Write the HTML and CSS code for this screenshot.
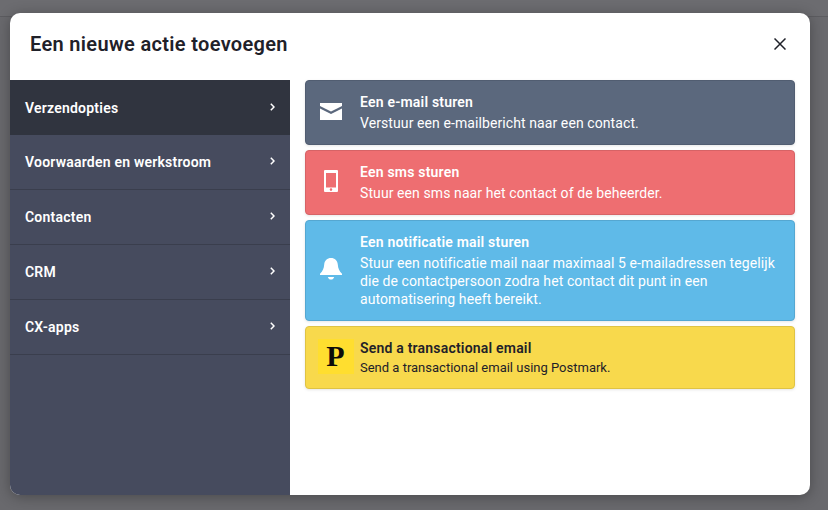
FILE: index.html
```html
<!DOCTYPE html>
<html lang="nl">
<head>
<meta charset="utf-8">
<title>Een nieuwe actie toevoegen</title>
<link rel="stylesheet" href="styles.css">
</head>
<body>
<div class="backdrop">
  <div class="modal">
    <header class="modal-head">
      <h1>Een nieuwe actie toevoegen</h1>
      <svg class="close" viewBox="0 0 12 12" width="12" height="12"><path d="M.5.5l11 11M11.500.5l-11 11" stroke="#1f2129" stroke-width="1.500" fill="none"/></svg>
    </header>
    <div class="modal-body">
      <nav class="side">
        <a class="side-item active"><span>Verzendopties</span><svg viewBox="0 0 5 8" width="5" height="8"><path d="M.8.8L4 4 .8 7.200" stroke="#fff" stroke-width="1.500" fill="none"/></svg></a>
        <a class="side-item"><span>Voorwaarden en werkstroom</span><svg viewBox="0 0 5 8" width="5" height="8"><path d="M.8.8L4 4 .8 7.200" stroke="#fff" stroke-width="1.500" fill="none"/></svg></a>
        <a class="side-item"><span>Contacten</span><svg viewBox="0 0 5 8" width="5" height="8"><path d="M.8.8L4 4 .8 7.200" stroke="#fff" stroke-width="1.500" fill="none"/></svg></a>
        <a class="side-item"><span>CRM</span><svg viewBox="0 0 5 8" width="5" height="8"><path d="M.8.8L4 4 .8 7.200" stroke="#fff" stroke-width="1.500" fill="none"/></svg></a>
        <a class="side-item"><span>CX-apps</span><svg viewBox="0 0 5 8" width="5" height="8"><path d="M.8.8L4 4 .8 7.200" stroke="#fff" stroke-width="1.500" fill="none"/></svg></a>
      </nav>
      <main class="cards">
        <div class="card slate">
          <div class="icon"><svg viewBox="0 0 22 17" width="22" height="17"><path d="M0 0h22v3L11 8.500 0 3z M0 5.500l11 5.500 11-5.500V17H0z" fill="#fff"/></svg></div>
          <div class="text"><h2>Een e-mail sturen</h2><p>Verstuur een e-mailbericht naar een contact.</p></div>
        </div>
        <div class="card red">
          <div class="icon"><svg viewBox="0 0 14 22" width="14" height="22"><path fill-rule="evenodd" d="M1 0h12a1 1 0 0 1 1 1v20a1 1 0 0 1-1 1H1a1 1 0 0 1-1-1V1a1 1 0 0 1 1-1zM2 3v14.500h10V3zM7 18.300a1.300 1.300 0 1 0 0 2.600 1.300 1.300 0 0 0 0-2.600z" fill="#fff"/></svg></div>
          <div class="text"><h2>Een sms sturen</h2><p>Stuur een sms naar het contact of de beheerder.</p></div>
        </div>
        <div class="card blue">
          <div class="icon"><svg viewBox="0 0 22 22" width="22" height="22"><path d="M11 0c3.800 0 6.400 2.600 6.800 6.500.3 3.800 1.400 6.600 4.200 9.300V17H0v-1.200c2.800-2.700 3.900-5.500 4.200-9.300C4.600 2.600 7.200 0 11 0zM7.800 19h6.400c-.5 1.600-1.700 2.600-3.200 2.600S8.300 20.600 7.800 19z" fill="#fff"/></svg></div>
          <div class="text"><h2>Een notificatie mail sturen</h2><p>Stuur een notificatie mail naar maximaal 5 e-mailadressen tegelijk die de contactpersoon zodra het contact dit punt in een automatisering heeft bereikt.</p></div>
        </div>
        <div class="card yellow">
          <div class="icon"><span class="pm">P</span></div>
          <div class="text"><h2>Send a transactional email</h2><p>Send a transactional email using Postmark.</p></div>
        </div>
      </main>
    </div>
  </div>
</div>
</body>
</html>
```

FILE: styles.css
```css
* { box-sizing: border-box; }
html, body { margin: 0; height: 100%; }
body { font-family: Roboto, "Noto Sans", sans-serif; overflow: hidden; }
.backdrop { height: 510px; padding: 13px 18px 15px 10px; background: linear-gradient(#6c6c70 16px, #5c5c60 16px, #5c5c60 17px, #69696d 17px); }
.modal { height: 482px; background: #fff; border-radius: 10px; box-shadow: 0 2px 14px rgba(0,0,0,.3); overflow: hidden; display: flex; flex-direction: column; }
.modal-head { height: 67px; flex: none; display: flex; align-items: center; justify-content: space-between; padding: 0 24px 5px 20px; }
h1 { margin: 0; font-size: 20px; font-weight: 600; letter-spacing: .33px; color: #1f2129; }
.close { display: block; }
.modal-body { flex: 1; display: flex; min-height: 0; }
.side { width: 280px; flex: none; background: #464b5e; }
.side-item { height: 55px; display: flex; align-items: center; justify-content: space-between; padding: 0 15px; color: #fff; font-size: 14px; font-weight: 600; letter-spacing: .22px; border-bottom: 1px solid #32364299; }
.side-item svg { margin-bottom: 2px; }
.side-item.active { background: #30343f; border-bottom: 0; }
.cards { flex: 1; padding: 0 15px; display: flex; flex-direction: column; gap: 5px; }
.card { display: flex; align-items: center; border-radius: 4px; padding: 12px 15px 12px 12px; border: 1px solid; box-shadow: 0 1px 3px rgba(0,0,0,.1); color: #fff; font-size: 14px; line-height: 18px; letter-spacing: .09px; }
.card h2 { margin: 0 0 3px; font-size: 14px; font-weight: 600; line-height: 18px; letter-spacing: .2px; }
.card p { margin: 0; }
.icon { width: 25px; flex: none; margin: 0 17px 3px 0; display: flex; justify-content: center; }
.icon svg { display: block; }
.slate { background: #5b687d; border-color: #515d71; }
.red { background: #ee6e71; border-color: #d66366; }
.blue { background: #5fbae8; border-color: #55a7d1; }
.yellow { background: #f8d94c; border-color: #dfc344; color: #1f2129; padding: 12px 15px 11px 12px; }
.yellow h2 { margin-bottom: 2px; }
.yellow p { font-size: 13px; letter-spacing: 0; }
.yellow .icon { margin-bottom: 0; }
.pm { width: 36px; height: 35px; flex: none; margin: -2px -10px 2px 0; background: #ffde2f; color: #0d0c0a; display: flex; align-items: center; justify-content: center; font: 700 30px "Liberation Serif", serif; letter-spacing: 0; }
```
